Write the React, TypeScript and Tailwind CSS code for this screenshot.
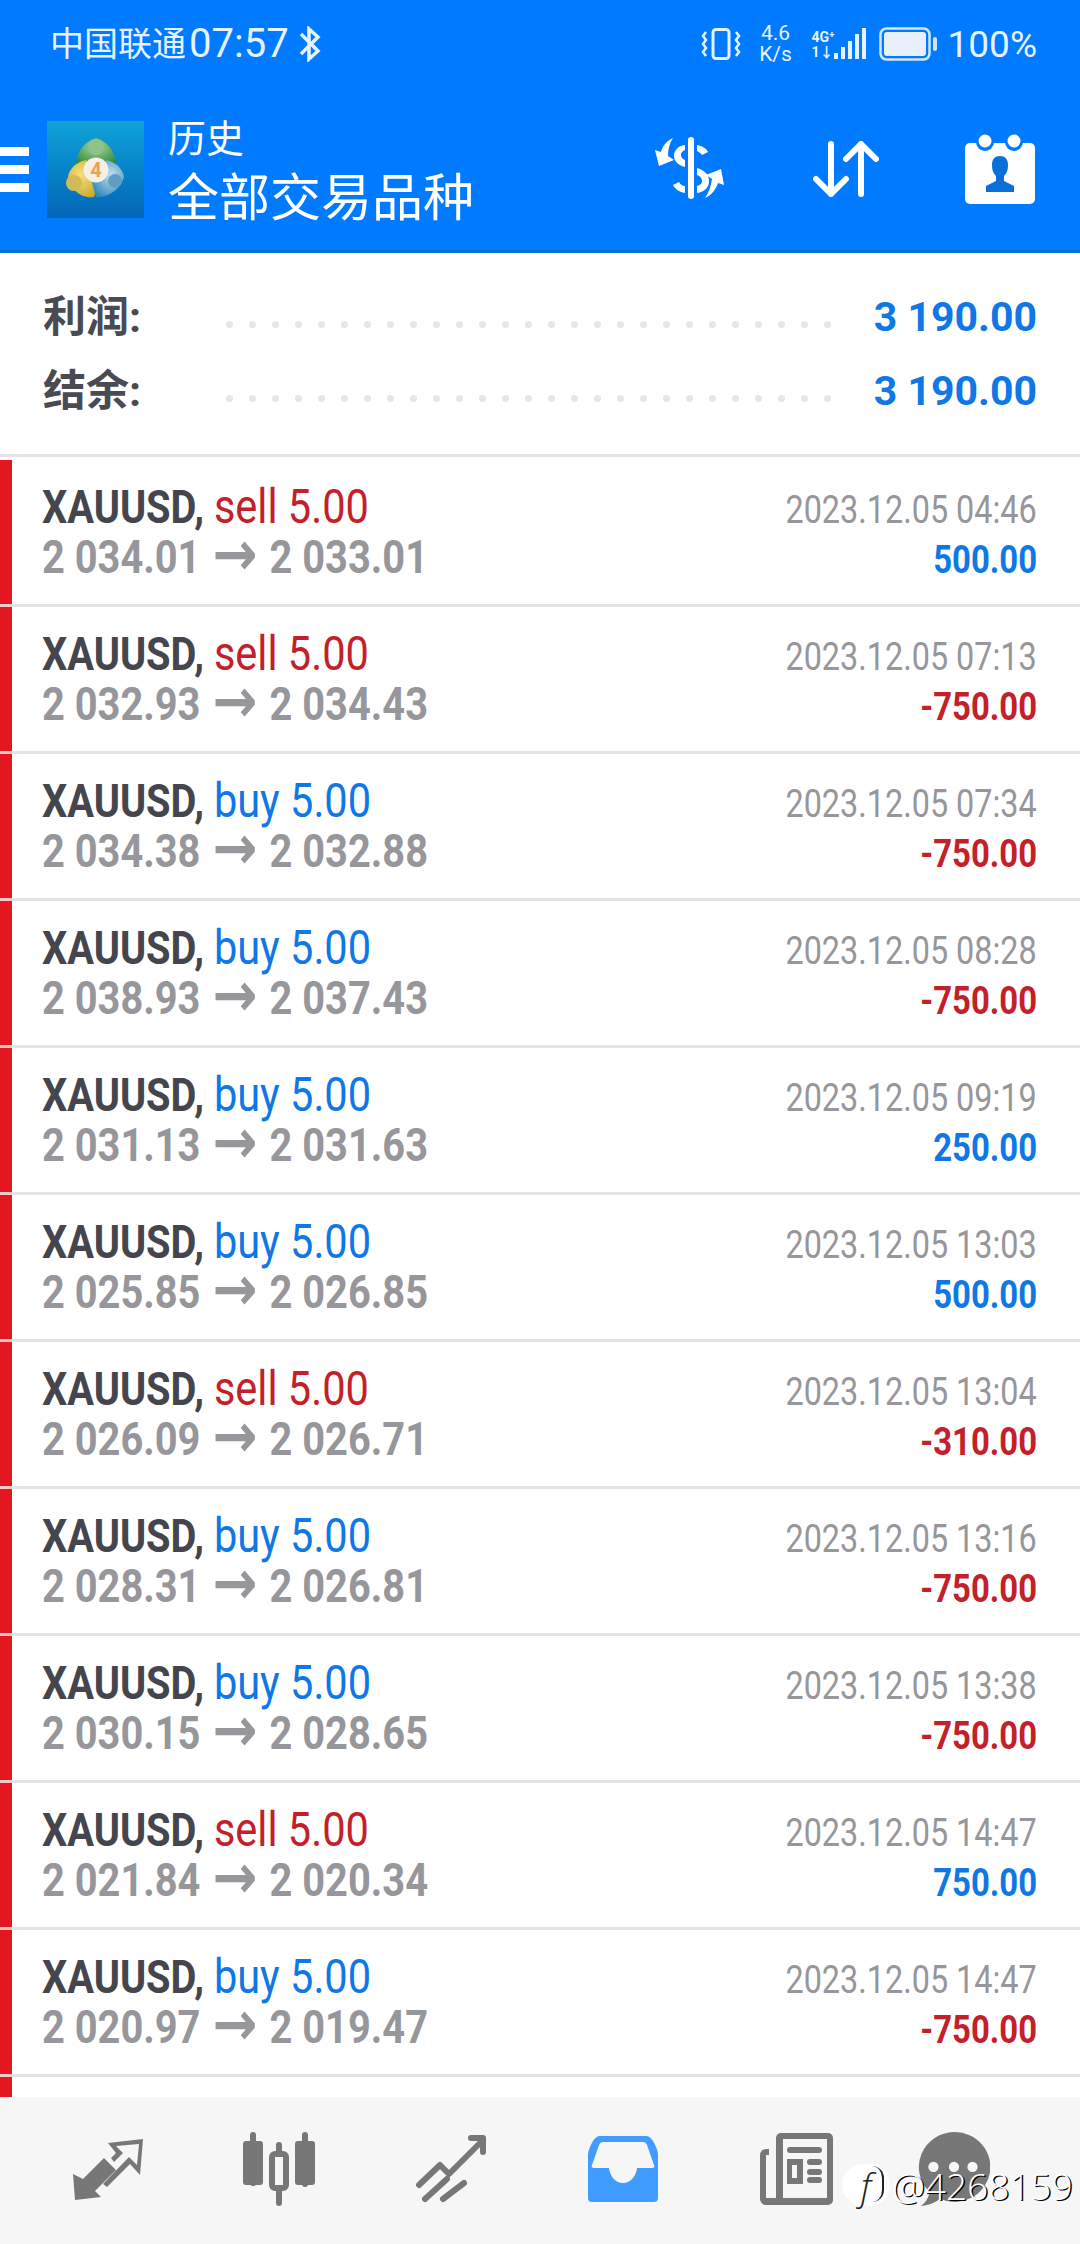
const rows = [
  { side: 'sell', open: '2 034.01', close: '2 033.01', time: '04:46', profit: '500.00' },
  { side: 'sell', open: '2 032.93', close: '2 034.43', time: '07:13', profit: '-750.00' },
  { side: 'buy', open: '2 034.38', close: '2 032.88', time: '07:34', profit: '-750.00' },
  { side: 'buy', open: '2 038.93', close: '2 037.43', time: '08:28', profit: '-750.00' },
  { side: 'buy', open: '2 031.13', close: '2 031.63', time: '09:19', profit: '250.00' },
  { side: 'buy', open: '2 025.85', close: '2 026.85', time: '13:03', profit: '500.00' },
  { side: 'sell', open: '2 026.09', close: '2 026.71', time: '13:04', profit: '-310.00' },
  { side: 'buy', open: '2 028.31', close: '2 026.81', time: '13:16', profit: '-750.00' },
  { side: 'buy', open: '2 030.15', close: '2 028.65', time: '13:38', profit: '-750.00' },
  { side: 'sell', open: '2 021.84', close: '2 020.34', time: '14:47', profit: '750.00' },
  { side: 'buy', open: '2 020.97', close: '2 019.47', time: '14:47', profit: '-750.00' },
]

function DotLeader() {
  return (
    <div className="flex-1 flex justify-between ml-[94px] mr-[43px] mt-[14px]">
      {Array.from({ length: 27 }).map((_, i) => <span key={i} className="w-[7px] h-[7px] rounded-full bg-[#e6e6e6]"></span>)}
    </div>
  )
}

function AppLogo() {
  return (
    <div className="w-[97px] h-[97px] ml-[18px] bg-gradient-to-b from-[#12a3d8] to-[#0565b8] flex items-center justify-center">
      <svg width="60" height="64" viewBox="0 0 60 64">
        <defs>
          <radialGradient id="g" cx="0.5" cy="0.3" r="0.7"><stop offset="0" stopColor="#a5d6a0" /><stop offset="1" stopColor="#2f8a3a" /></radialGradient>
          <radialGradient id="y" cx="0.4" cy="0.4" r="0.7"><stop offset="0" stopColor="#f3e27a" /><stop offset="1" stopColor="#c9a628" /></radialGradient>
          <radialGradient id="b" cx="0.6" cy="0.4" r="0.7"><stop offset="0" stopColor="#bfe0ee" /><stop offset="1" stopColor="#2f86bd" /></radialGradient>
        </defs>
        <path d="M30 1c-12 3-19 14-20 27l14 2h12l14-2C49 15 42 4 30 1z" fill="url(#g)" />
        <circle cx="30" cy="10" r="8" fill="#8ec48c" />
        <path d="M2 40c1-8 8-15 18-17l14 20-6 17C15 62 4 52 2 40z" fill="url(#y)" />
        <circle cx="8" cy="46" r="8" fill="#d2bb55" />
        <path d="M58 40c-1-8-8-15-18-17L26 46l4 14c13 1 25-9 28-20z" fill="url(#b)" />
        <circle cx="49" cy="44" r="7" fill="#5c9fc0" />
        <circle cx="30" cy="33" r="12.5" fill="#f5efe6" />
        <text x="30" y="40" textAnchor="middle" fontSize="20" fontWeight="700" fill="#eda252" fontFamily="Roboto, sans-serif">4</text>
      </svg>
    </div>
  )
}

export default function App() {
  return (
    <div className="w-[1080px] h-[2244px] bg-white flex flex-col overflow-hidden relative font-['Roboto','Noto_Sans_CJK_SC',sans-serif]">
      <div className="bg-[#007aff] h-[253px] border-b-[3px] border-[#0a6fd6] text-white">
        <div className="h-[88px] flex items-center pl-[50px] pr-[43px] text-[#e6f3ff]">
          <span className="text-[34px] leading-none">中国联通</span>
          <span className="text-[40px] leading-none ml-[3px]">07:57</span>
          <svg width="24" height="36" viewBox="0 0 24 36" className="ml-[9px]" fill="none" stroke="#e6f3ff" strokeWidth="3.5">
            <path d="M3 8 20 25 11 33V3l9 8L3 28" />
          </svg>
          <div className="flex-1"></div>
          <svg width="40" height="32" viewBox="0 0 40 32" fill="none" stroke="#e6f3ff" strokeWidth="3">
            <rect x="12" y="1.5" width="16" height="29" rx="3" />
            <path d="M5 4 2 8l3 4-3 4 3 4-3 4 3 4M35 4l3 4-3 4 3 4-3 4 3 4-3 4" strokeWidth="2.5" />
          </svg>
          <div className="ml-[17px] w-[36px] flex flex-col items-center text-[21px] leading-[21px]"><span>4.6</span><span>K/s</span></div>
          <div className="ml-[18px] flex items-end">
            <div className="flex flex-col text-[14px] leading-[15px] font-bold w-[22px]"><span>4G⁺</span><span>1↓</span></div>
            <svg width="32" height="32" viewBox="0 0 32 32" fill="#e6f3ff">
              <rect x="0" y="25" width="4" height="6" /><rect x="7" y="19" width="4" height="12" /><rect x="14" y="13" width="4" height="18" /><rect x="21" y="6" width="4" height="25" /><rect x="28" y="0" width="4" height="31" />
            </svg>
          </div>
          <svg width="58" height="34" viewBox="0 0 58 34" className="ml-[13px]" fill="none">
            <rect x="1.5" y="1.5" width="49" height="31" rx="6" stroke="#cfe6ff" strokeWidth="2.5" />
            <rect x="5" y="5" width="42" height="24" rx="3" fill="#e8f1fb" />
            <rect x="54" y="10" width="4" height="14" rx="2" fill="#cfe6ff" />
          </svg>
          <span className="text-[37px] leading-none ml-[11px]">100%</span>
        </div>
        <div className="flex items-center h-[162px]">
          <div className="flex flex-col gap-[9px] w-[29px]">
            <span className="h-[9px] bg-white"></span>
            <span className="h-[9px] bg-white"></span>
            <span className="h-[9px] bg-white"></span>
          </div>
          <AppLogo />
          <div className="ml-[24px] pt-[7px] flex flex-col">
            <span className="text-[38px] leading-[46px]">历史</span>
            <span className="text-[51px] leading-[60px] mt-[7px]">全部交易品种</span>
          </div>
          <div className="flex-1"></div>
          <svg width="72" height="64" viewBox="0 0 72 64" fill="#fff">
            <rect x="33" y="0" width="6" height="62" rx="3" />
            <path d="M30 8c-7 1-11 5-11 11 0 5 4 9 11 11v-7c-2-1-4-2-4-5s2-4 4-5zM42 8c5 1 9 3 11 7l-6 3c-1-2-3-3-5-4zM42 31c7 2 12 6 12 13 0 7-5 11-12 12v-7c3-1 5-2 5-5s-2-5-5-6zM30 56c-6-1-10-4-12-8l6-3c1 2 3 4 6 4z" />
            <path d="M18 1C11 4 7 10 6 15L0 13l4 16 15-6-6-4c0-6 1-12 5-18zM50 61c7-3 11-9 13-15l6 2-3-16-15 6 6 4c-1 7-3 13-7 19z" />
          </svg>
          <svg width="66" height="56" viewBox="0 0 66 56" className="ml-[86px]" fill="none" stroke="#fff" strokeWidth="6" strokeLinecap="round" strokeLinejoin="round">
            <path d="M18 3v50M3 38l15 15 15-15M48 53V3M33 18 48 3l15 15" />
          </svg>
          <svg width="70" height="70" viewBox="0 0 70 70" className="ml-[86px] mr-[45px]">
            <rect x="0" y="9" width="70" height="61" rx="5" fill="#fff" />
            <circle cx="20" cy="8" r="9" fill="#007aff" /><circle cx="49" cy="8" r="9" fill="#007aff" />
            <circle cx="20" cy="7" r="6.5" fill="#fff" /><circle cx="49" cy="7" r="6.5" fill="#fff" />
            <path d="M21 58v-6l10-5v-5c-3-3-4-6-4-11 0-6 3-9 8-9s8 3 8 9c0 5-1 8-4 11v5l10 5v6z" fill="#0a6fd6" />
          </svg>
        </div>
      </div>

      <div className="h-[204px] border-b-[3px] border-[#e4e4e6] flex flex-col pt-[45px] px-[43px] gap-[36px] leading-[38px]">
        {['利润:', '结余:'].map(label => (
          <div key={label} className="flex items-center h-[38px]">
            <span className="text-[43px] font-bold text-[#4a4a52] w-[89px] whitespace-nowrap">{label}</span>
            <DotLeader />
            <span className="text-[41px] font-bold text-[#0f77e6]">3 190.00</span>
          </div>
        ))}
      </div>

      <div className="flex-1 overflow-hidden pt-[3px]">
        {rows.map((r, i) => (
          <div key={i} className="h-[147px] flex">
            <div className="w-[12px] bg-[#e3171f] border-b-[3px] border-[#f7c9c9]"></div>
            <div className="flex-1 flex justify-between pl-[30px] pr-[43px] pt-[22px] border-b-[3px] border-[#e4e4e6]">
              <div className="flex flex-col origin-left scale-x-[0.865] whitespace-nowrap">
                <div className="text-[46px] leading-[50px]">
                  <span className="font-bold text-[#45454d]">XAUUSD, </span>
                  <span className={`text-[48px] leading-none ${r.side === 'sell' ? 'text-[#c4202a]' : 'text-[#0f77e6]'}`}>{r.side} 5.00</span>
                </div>
                <div className="text-[46px] leading-[50px] font-bold text-[#96969b]">{r.open}<span className="font-['DejaVu_Sans'] text-[62px] leading-[0] mx-[14px] relative top-[2px]">→</span>{r.close}</div>
              </div>
              <div className="flex flex-col items-end whitespace-nowrap mt-[3px]">
                <div className="origin-right scale-x-[0.83] text-[39px] leading-[50px] text-[#96969b]">2023.12.05 {r.time}</div>
                <div className={`origin-right scale-x-[0.865] text-[38px] leading-[50px] font-bold ${r.profit.startsWith('-') ? 'text-[#c4202a]' : 'text-[#0f77e6]'}`}>{r.profit}</div>
              </div>
            </div>
          </div>
        ))}
        <div className="h-[40px] flex"><div className="w-[12px] bg-[#e3171f]"></div></div>
      </div>

      <div className="h-[147px] bg-[#f6f6f6] flex items-center pb-[4px]">
        <svg width="70" height="64" viewBox="0 0 70 64" className="ml-[73px]" fill="#777">
          <path d="M0 37 2 63l26-3-6-6 21-21-12-12-21 21z" />
          <path d="M35 6 70 2l-3 36-10-11-23 23-4-3 26-27 8 8 2-21-23 2 7 7-9 9-3-4 5-5z" />
        </svg>
        <svg width="73" height="74" viewBox="0 0 73 74" className="ml-[100px]" fill="#777">
          <rect x="0" y="9" width="20" height="44" rx="3" /><rect x="7" y="0" width="6" height="54" rx="3" /><rect x="7" y="40" width="6" height="14" rx="3" />
          <rect x="52" y="9" width="20" height="44" rx="3" /><rect x="59" y="0" width="6" height="55" rx="3" />
          <rect x="33" y="10" width="6" height="64" rx="3" />
          <rect x="29" y="22" width="14" height="34" rx="3" fill="#f6f6f6" stroke="#777" strokeWidth="6" />
        </svg>
        <svg width="70" height="68" viewBox="0 0 70 68" className="ml-[100px]" fill="none" stroke="#777" strokeWidth="6" strokeLinecap="round" strokeLinejoin="round">
          <path d="M3 50 24 30l9 9 34-34M55 3h12v14" />
          <path d="M9 64l22-20M27 64l21-16" />
        </svg>
        <svg width="70" height="66" viewBox="0 0 70 66" className="ml-[102px]" fill="#409cff">
          <path d="M12 0h46c3 0 5 2 7 5 3 5 5 10 5 14v43a4 4 0 0 1-4 4H4a4 4 0 0 1-4-4V19c0-4 2-9 5-14 2-3 4-5 7-5z" />
          <path d="M15 6h40c2 0 3 1 4 3l7 20c1 2 0 3-2 3H49c-1 8-6 15-14 15s-13-7-14-15H6c-2 0-3-1-2-3l7-20c1-2 2-3 4-3z" fill="#f6f6f6" />
        </svg>
        <svg width="73" height="72" viewBox="0 0 73 72" className="ml-[102px]" fill="#777">
          <path d="M22 0h46a5 5 0 0 1 5 5v62a5 5 0 0 1-5 5H6a6 6 0 0 1-6-6V22a6 6 0 0 1 6-6h3v6H6v43h10V5a5 5 0 0 1 6-5zm1 6v59h44V6z" />
          <rect x="27" y="14" width="35" height="6" rx="3" /><path d="M27 26h16v25H27zm5 6v13h5V32z" /><rect x="47" y="26" width="15" height="6" rx="3" /><rect x="47" y="36" width="15" height="6" rx="3" /><rect x="47" y="44" width="15" height="6" rx="3" />
        </svg>
        <svg width="72" height="74" viewBox="0 0 70 72" className="ml-[85px]" fill="#777">
          <path d="M35 0a35 34 0 1 1-14 65c-3 3-8 6-18 7 5-4 8-9 8-14A35 34 0 0 1 35 0z" />
          <circle cx="15" cy="34" r="5" fill="#f6f6f6" /><circle cx="35" cy="34" r="5" fill="#f6f6f6" /><circle cx="53" cy="34" r="5" fill="#f6f6f6" />
        </svg>
      </div>

      <div className="absolute left-[842px] top-[2164px] flex items-center text-[37px] leading-none text-white font-['Open_Sans'] font-light [text-shadow:1.5px_1px_0_#000]">
        <span className="relative w-[48px] h-[42px] mr-[2px] rounded-full bg-white flex items-center justify-center italic text-[#222] [text-shadow:none]">
          f
          <span className="absolute right-[6px] top-[2px] w-[12px] h-[36px] rounded-r-full border-r-[2px] border-[#222]"></span>
        </span>
        @4268159
      </div>
    </div>
  )
}
